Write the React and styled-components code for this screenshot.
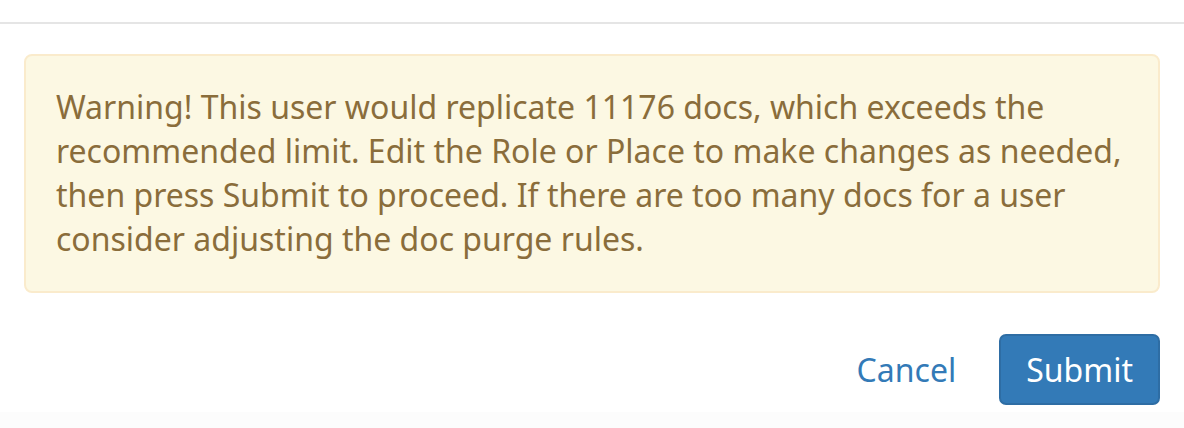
import styled, { createGlobalStyle } from 'styled-components';

const GlobalStyle = createGlobalStyle`
  html, body {
    margin: 0;
    padding: 0;
    background: #fcfcfc;
  }
  body {
    font-family: "Noto Sans", "Open Sans", sans-serif;
  }
`;

const Modal = styled.div`
  width: 1184px;
  background: #ffffff;
  display: flex;
  flex-direction: column;
`;

const Header = styled.div`
  height: 22px;
  border-bottom: 2px solid #e5e5e5;
`;

const Body = styled.div`
  padding: 30px 24px 0;
`;

const Alert = styled.div`
  background: #fcf8e3;
  border: 2px solid #faebcc;
  border-radius: 8px;
  color: #8a6d3b;
  padding: 29px 30px 30px;
  font-size: 32px;
  line-height: 44px;
`;

const Footer = styled.div`
  display: flex;
  justify-content: flex-end;
  align-items: center;
  gap: 16px;
  padding: 41px 24px 7px;
`;

const Button = styled.button`
  font-family: "Noto Sans", "Open Sans", sans-serif;
  font-size: 32px;
  line-height: 44px;
  height: 71px;
  padding: 0 25px;
  border-radius: 7px;
  cursor: pointer;
  border: 2px solid ${p => (p.primary ? '#2e6da4' : 'transparent')};
  background: ${p => (p.primary ? '#337ab7' : 'transparent')};
  color: ${p => (p.primary ? '#ffffff' : '#337ab7')};
`;

export default function App() {
  return (
    <>
      <GlobalStyle />
      <Modal>
        <Header />
        <Body>
          <Alert>
            Warning! This user would replicate 11176 docs, which exceeds the recommended limit. Edit the Role or Place to make changes as needed, then press Submit to proceed. If there are too many docs for a user consider adjusting the doc purge rules.
          </Alert>
        </Body>
        <Footer>
          <Button>Cancel</Button>
          <Button primary>Submit</Button>
        </Footer>
      </Modal>
    </>
  );
}
